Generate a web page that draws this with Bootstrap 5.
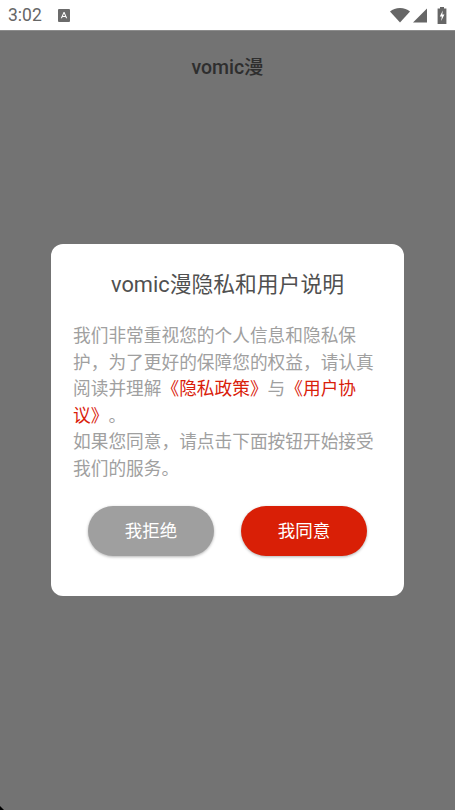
<!DOCTYPE html>
<html lang="zh-CN">
<head>
<meta charset="utf-8">
<title>vomic漫</title>
<link rel="stylesheet" href="https://cdn.jsdelivr.net/npm/bootstrap@5.3.0/dist/css/bootstrap.min.css">
<style>
html,body{height:100%;margin:0;overflow:hidden}
body{font-family:Roboto,"Noto Sans CJK SC",sans-serif;background:#737373;text-spacing-trim:space-all}
.phone{height:810px;width:455px}
.statusbar{height:31px;background:#fff;border-bottom:1px solid #8c8c8c;color:#666;padding:0 8px}
.clock{font-size:17.5px;line-height:30px}
.appbar{height:73px;font-size:19.5px;font-weight:500;color:#2e2e2e;line-height:73px}
.stage{flex:1 1 auto}
.dialog{width:353px;height:352px;margin:140px auto 0;background:#fff;border-radius:12px;padding:25px 22px 0}
.dlg-title{font-size:21.8px;font-weight:400;line-height:32px;color:#505050;margin:0}
.dlg-text{font-size:17.7px;line-height:26.6px;color:#a0a0a0;margin:22px 0 0}
.dlg-text span{color:#d9200a}
.dlg-actions{margin-top:23px;padding:0 15px;gap:27px}
.pill{width:126px;height:50px;border:0;border-radius:25px;color:#fff;font-size:17.5px;line-height:50px;padding:0;box-shadow:0 1px 3px rgba(0,0,0,.3)}
.pill-gray{background:#9f9f9f}
.pill-red{background:#d91f06}
.pill-gray:hover,.pill-gray:active{background:#9f9f9f;color:#fff}
.pill-red:hover,.pill-red:active{background:#d91f06;color:#fff}
.ic-a{margin-left:16px}
.ic-sig{margin-left:3px}
.ic-bat{margin-left:10px}
.corner{position:absolute;left:0;bottom:0;display:block}
</style>
</head>
<body>
<div class="phone d-flex flex-column position-relative">
  <div class="statusbar d-flex align-items-center justify-content-between flex-shrink-0">
    <div class="d-flex align-items-center">
      <span class="clock">3:02</span>
      <svg class="ic-a" width="12" height="13" viewBox="0 0 12 13"><rect width="12" height="13" rx="1" fill="#6b6b6b"/><path d="M2.800 9.200 5.600 3h.9l2.700 6.200H8L7.500 7.900H4.500L4 9.200zM4.900 6.900h2.200L6 4.500z" fill="#fff"/></svg>
    </div>
    <div class="d-flex align-items-center">
      <svg width="20" height="16" viewBox="0 0 20 16"><path d="M0 4.500C2.600 2.300 6 1 10 1s7.400 1.300 10 3.500L10 15.500z" fill="#666"/></svg>
      <svg class="ic-sig" width="14" height="16" viewBox="0 0 14 16"><path d="M0 15.500 14 1.500v14z" fill="#666"/></svg>
      <svg class="ic-bat" width="10" height="17" viewBox="0 0 10 17"><path d="M3 0h4v1.500h2.400V17H.6V1.500H3z" fill="#666"/><path d="M5.800 3.500 2.800 9.500h2L4.200 14l3.200-6.500H5.300z" fill="#fff"/></svg>
    </div>
  </div>
  <div class="appbar text-center flex-shrink-0">vomic漫</div>
  <div class="stage">
    <div class="dialog d-flex flex-column">
      <h5 class="dlg-title text-center">vomic漫隐私和用户说明</h5>
      <p class="dlg-text">我们非常重视您的个人信息和隐私保护，为了更好的保障您的权益，请认真阅读并理解<span>《隐私政策》</span>与<span>《用户协议》</span>。<br>如果您同意，请点击下面按钮开始接受我们的服务。</p>
      <div class="dlg-actions d-flex justify-content-center">
        <button type="button" class="btn pill pill-gray">我拒绝</button>
        <button type="button" class="btn pill pill-red">我同意</button>
      </div>
    </div>
  </div>
  <svg class="corner" width="4" height="4" viewBox="0 0 4 4"><path d="M0 0 4 4H0z" fill="#000"/></svg>
</div>
<script src="https://cdn.jsdelivr.net/npm/bootstrap@5.3.0/dist/js/bootstrap.bundle.min.js"></script>
</body>
</html>
